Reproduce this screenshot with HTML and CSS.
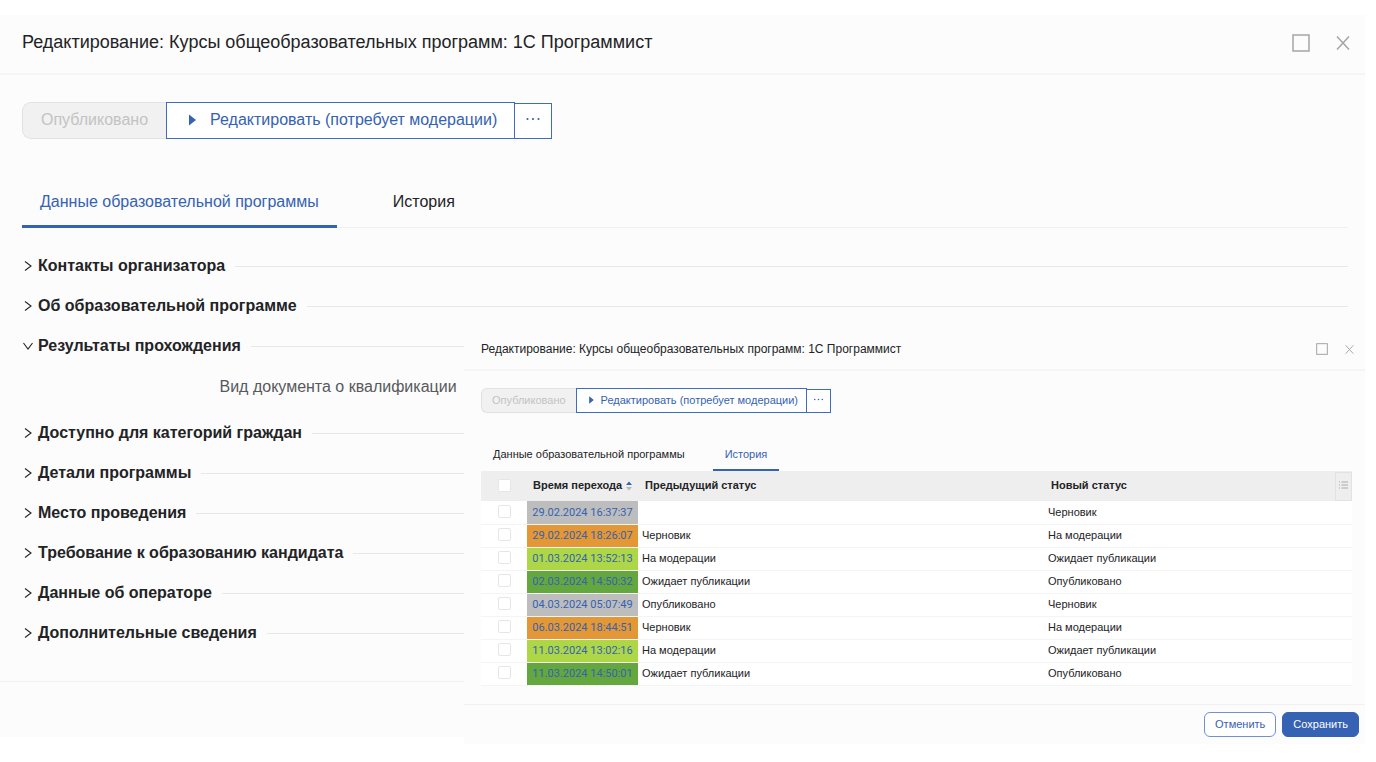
FILE: index.html
```
<!DOCTYPE html>
<html lang="ru">
<head>
<meta charset="utf-8">
<title>Редактирование: 1С Программист</title>
<link rel="stylesheet" href="styles.css">
</head>
<body>
<svg class="sprite" aria-hidden="true">
  <symbol id="i-max" viewBox="0 0 18 18"><rect x="1" y="1" width="16" height="16" fill="none" stroke="currentColor" stroke-width="1.5"/></symbol>
  <symbol id="i-close" viewBox="0 0 14 14"><path d="M1 0.5L13 13.5M13 0.5L1 13.5" fill="none" stroke="currentColor" stroke-width="1.5"/></symbol>
  <symbol id="i-play" viewBox="0 0 7 12"><path d="M0 0.5L7 6L0 11.5Z" fill="currentColor"/></symbol>
  <symbol id="i-dots" viewBox="0 0 16 4"><circle cx="2.500" cy="2" r="1.1" fill="currentColor"/><circle cx="8" cy="2" r="1.1" fill="currentColor"/><circle cx="13.500" cy="2" r="1.1" fill="currentColor"/></symbol>
  <symbol id="i-right" viewBox="0 0 10 10"><path d="M2 0.5L8 5L2 9.5" fill="none" stroke="currentColor" stroke-width="1.1"/></symbol>
  <symbol id="i-down" viewBox="0 0 10 10"><path d="M0.5 2L5 8L9.500 2" fill="none" stroke="currentColor" stroke-width="1.1"/></symbol>
  <symbol id="i-list" viewBox="0 0 9 8"><path d="M2.500 1H9M2.500 4H9M2.500 7H9M0 1H1M0 4H1M0 7H1" fill="none" stroke="currentColor" stroke-width="0.8"/></symbol>
</svg>

<div class="page">
<main class="window">
  <header class="titlebar">
    <h1 class="title">Редактирование: Курсы общеобразовательных программ: 1С Программист</h1>
    <div class="controls">
      <button class="ctl" aria-label="Развернуть"><svg class="ico-max"><use href="#i-max"/></svg></button>
      <button class="ctl" aria-label="Закрыть"><svg class="ico-close"><use href="#i-close"/></svg></button>
    </div>
  </header>
  <div class="content">
    <div class="actions">
      <button class="status" disabled>Опубликовано</button>
      <button class="edit"><svg class="ico-play"><use href="#i-play"/></svg>Редактировать (потребует модерации)</button>
      <button class="more" aria-label="Ещё"><svg class="ico-dots"><use href="#i-dots"/></svg></button>
    </div>
    <nav class="tabs">
      <button class="tab active">Данные образовательной программы</button>
      <button class="tab">История</button>
    </nav>
    <div class="sections">
      <button class="section"><svg><use href="#i-right"/></svg>Контакты организатора</button>
      <button class="section"><svg><use href="#i-right"/></svg>Об образовательной программе</button>
      <button class="section"><svg><use href="#i-down"/></svg>Результаты прохождения</button>
      <div class="field">Вид документа о квалификации</div>
      <button class="section"><svg><use href="#i-right"/></svg>Доступно для категорий граждан</button>
      <button class="section"><svg><use href="#i-right"/></svg>Детали программы</button>
      <button class="section"><svg><use href="#i-right"/></svg>Место проведения</button>
      <button class="section"><svg><use href="#i-right"/></svg>Требование к образованию кандидата</button>
      <button class="section"><svg><use href="#i-right"/></svg>Данные об операторе</button>
      <button class="section"><svg><use href="#i-right"/></svg>Дополнительные сведения</button>
    </div>
  </div>
  <footer class="bottom"></footer>
</main>

<section class="window history">
  <header class="titlebar">
    <h2 class="title">Редактирование: Курсы общеобразовательных программ: 1С Программист</h2>
    <div class="controls">
      <button class="ctl" aria-label="Развернуть"><svg class="ico-max"><use href="#i-max"/></svg></button>
      <button class="ctl" aria-label="Закрыть"><svg class="ico-close"><use href="#i-close"/></svg></button>
    </div>
  </header>
  <div class="content">
    <div class="actions">
      <button class="status" disabled>Опубликовано</button>
      <button class="edit"><svg class="ico-play"><use href="#i-play"/></svg>Редактировать (потребует модерации)</button>
      <button class="more" aria-label="Ещё"><svg class="ico-dots"><use href="#i-dots"/></svg></button>
    </div>
    <nav class="tabs">
      <button class="tab">Данные образовательной программы</button>
      <button class="tab active">История</button>
    </nav>
    <table class="log">
      <colgroup><col class="c-check"><col class="c-time"><col><col class="c-new"><col class="c-menu"></colgroup>
      <thead>
        <tr>
          <th class="check"><input type="checkbox" aria-label="Выбрать все"></th>
          <th class="sorted">Время перехода<svg class="ico-sort" viewBox="0 0 6 10"><path d="M0 4L3 0.500L6 4Z" fill="#3562b2"/><path d="M0 6L3 9.500L6 6Z" fill="#b8b8b8"/></svg></th>
          <th>Предыдущий статус</th>
          <th>Новый статус</th>
          <th class="menu"><button class="cols" aria-label="Столбцы"><svg class="ico-list"><use href="#i-list"/></svg></button></th>
        </tr>
      </thead>
      <tbody>
        <tr><td class="check"><input type="checkbox" aria-label="Выбрать"></td><td class="time draft"><a href="#">29.02.2024 16:37:37</a></td><td></td><td colspan="2">Черновик</td></tr>
        <tr><td class="check"><input type="checkbox" aria-label="Выбрать"></td><td class="time moderation"><a href="#">29.02.2024 18:26:07</a></td><td>Черновик</td><td colspan="2">На модерации</td></tr>
        <tr><td class="check"><input type="checkbox" aria-label="Выбрать"></td><td class="time waiting"><a href="#">01.03.2024 13:52:13</a></td><td>На модерации</td><td colspan="2">Ожидает публикации</td></tr>
        <tr><td class="check"><input type="checkbox" aria-label="Выбрать"></td><td class="time published"><a href="#">02.03.2024 14:50:32</a></td><td>Ожидает публикации</td><td colspan="2">Опубликовано</td></tr>
        <tr><td class="check"><input type="checkbox" aria-label="Выбрать"></td><td class="time draft"><a href="#">04.03.2024 05:07:49</a></td><td>Опубликовано</td><td colspan="2">Черновик</td></tr>
        <tr><td class="check"><input type="checkbox" aria-label="Выбрать"></td><td class="time moderation"><a href="#">06.03.2024 18:44:51</a></td><td>Черновик</td><td colspan="2">На модерации</td></tr>
        <tr><td class="check"><input type="checkbox" aria-label="Выбрать"></td><td class="time waiting"><a href="#">11.03.2024 13:02:16</a></td><td>На модерации</td><td colspan="2">Ожидает публикации</td></tr>
        <tr><td class="check"><input type="checkbox" aria-label="Выбрать"></td><td class="time published"><a href="#">11.03.2024 14:50:01</a></td><td>Ожидает публикации</td><td colspan="2">Опубликовано</td></tr>
      </tbody>
    </table>
  </div>
  <footer class="bottom">
    <button class="cancel">Отменить</button>
    <button class="save">Сохранить</button>
  </footer>
</section>
</div>
</body>
</html>
```
FILE: styles.css
```
* { box-sizing: border-box; }
body {
  margin: 0;
  background: #fff;
  color: #222325;
  font-family: "Liberation Sans", Arial, sans-serif;
  font-size: 16px;
}
button { font: inherit; color: inherit; background: none; border: 0; padding: 0; margin: 0; }
svg { display: block; flex: none; }
.sprite { position: absolute; width: 0; height: 0; }
.page { position: relative; padding: 15px 11px 18px 0; }
.window { background: #fcfcfc; }

.titlebar {
  display: flex;
  align-items: center;
  justify-content: space-between;
  height: 60px;
  padding: 0 15px 3px 22px;
  border-bottom: 2px solid #f5f5f5;
}
.title { margin: 0; font-size: 18px; font-weight: 400; }
.controls { display: flex; align-items: center; gap: 26px; color: #a5a5a5; }
.ico-max { width: 18px; height: 18px; }
.ico-close { width: 14px; height: 14px; }

.content { padding: 27px 17px 28px 22px; }
.actions { display: flex; align-items: flex-end; height: 37px; }
.status {
  height: 37px;
  padding: 0 18px 2px;
  border: 1px solid #e2e2e2;
  border-right: 0;
  border-radius: 9px 0 0 9px;
  background: #f1f1f1;
  color: #c3c3c3;
}
.edit {
  display: flex;
  align-items: center;
  gap: 14px;
  height: 37px;
  padding: 0 17px 2px 22px;
  border: 1px solid #3d6dbd;
  background: #fff;
  color: #3562b2;
}
.ico-play { width: 7px; height: 12px; }
.more {
  display: flex;
  align-items: center;
  justify-content: center;
  width: 37px;
  height: 36px;
  padding-bottom: 4px;
  border: 1px solid #3d6dbd;
  border-left: 0;
  background: #fff;
  color: #3562b2;
}
.ico-dots { width: 16px; height: 4px; }

.tabs { display: flex; gap: 38px; margin-top: 37px; border-bottom: 1px solid #f1f1f1; }
.tab { height: 52px; padding: 2px 18px 0; margin-bottom: -1px; border-bottom: 3px solid transparent; }
.tab.active { color: #3562b2; border-color: #3562b2; }

.sections { padding-top: 18px; }
.section {
  display: flex;
  align-items: center;
  width: 100%;
  height: 40px;
  padding-left: 1px;
  font-weight: 700;
}
.section svg { width: 10px; height: 10px; margin-right: 5px; }
.section::after { content: ""; flex: 1; height: 1px; margin-left: 10px; background: #e8e8e8; }
.field { width: 33%; padding: 12px 3px 0 0; height: 47px; text-align: right; color: #58595b; }
.window > .bottom { height: 56px; border-top: 1px solid #f1f1f1; }

.history { position: absolute; top: 328px; left: 464px; right: 11px; font-size: 11px; }
.history .titlebar { height: 43px; padding: 1px 11px 0 17px; }
.history .title { font-size: 12px; }
.history .controls { gap: 17px; }
.history .ico-max { width: 12px; height: 12px; }
.history .ico-close { width: 9px; height: 9px; }
.history .content { padding: 17px 13px 18px 17px; }
.history .actions { height: 25px; }
.history .status { height: 25px; padding: 0 10px 2px; border-radius: 6px 0 0 6px; }
.history .edit { height: 25px; gap: 7px; padding: 0 8px 2px 12px; }
.history .ico-play { width: 5px; height: 8px; }
.history .more { width: 24px; height: 24px; padding-bottom: 3px; }
.history .ico-dots { width: 11px; height: 3px; }
.history .tabs { gap: 16px; margin-top: 24px; border: 0; }
.history .tab { height: 34px; margin: 0; padding: 2px 12px 0; border-bottom-width: 2px; }

.log { width: 100%; table-layout: fixed; border-collapse: collapse; background: #fff; }
.c-check { width: 46px; }
.c-time { width: 111px; }
.c-new { width: 291px; }
.c-menu { width: 17px; }
.log th { height: 30px; padding: 0 0 3px 7px; background: #eee; text-align: left; }
.log th.sorted { padding-left: 6px; }
.log td { height: 23px; padding: 0 4px 1px; border-bottom: 1px solid #f4f4f4; }
.log th.check, .log td.check { padding: 0 0 2px; text-align: center; }
.log input {
  appearance: none;
  display: block;
  width: 13px;
  height: 13px;
  margin: 0 auto;
  border: 1px solid #e6e6e6;
  border-radius: 2px;
  background: #fff;
}
.ico-sort { display: inline-block; width: 6px; height: 10px; margin-left: 4px; vertical-align: -2px; }
.log td.time { padding: 0; text-align: center; font-family: Roboto, sans-serif; }
.time a { color: #3562b2; text-decoration: none; }
.draft { background: #bdbdbd; }
.moderation { background: #e39735; }
.waiting { background: #aed747; }
.published { background: #64a73e; }
.log th.menu { padding: 0; }
.cols { display: flex; align-items: center; justify-content: center; width: 100%; height: 29px; padding-bottom: 2px; border: 1px solid #e2e2e2; color: #9a9a9a; }
.ico-list { width: 9px; height: 8px; }

.history > .bottom { display: flex; justify-content: flex-end; gap: 6px; height: auto; padding: 7px 6px 7px; }
.cancel, .save { height: 25px; padding: 0 10px; border: 1px solid #3562b2; border-radius: 6px; }
.cancel { background: #fff; border-color: #6f93cf; color: #3562b2; }
.save { background: #3562b2; color: #fff; }
```
